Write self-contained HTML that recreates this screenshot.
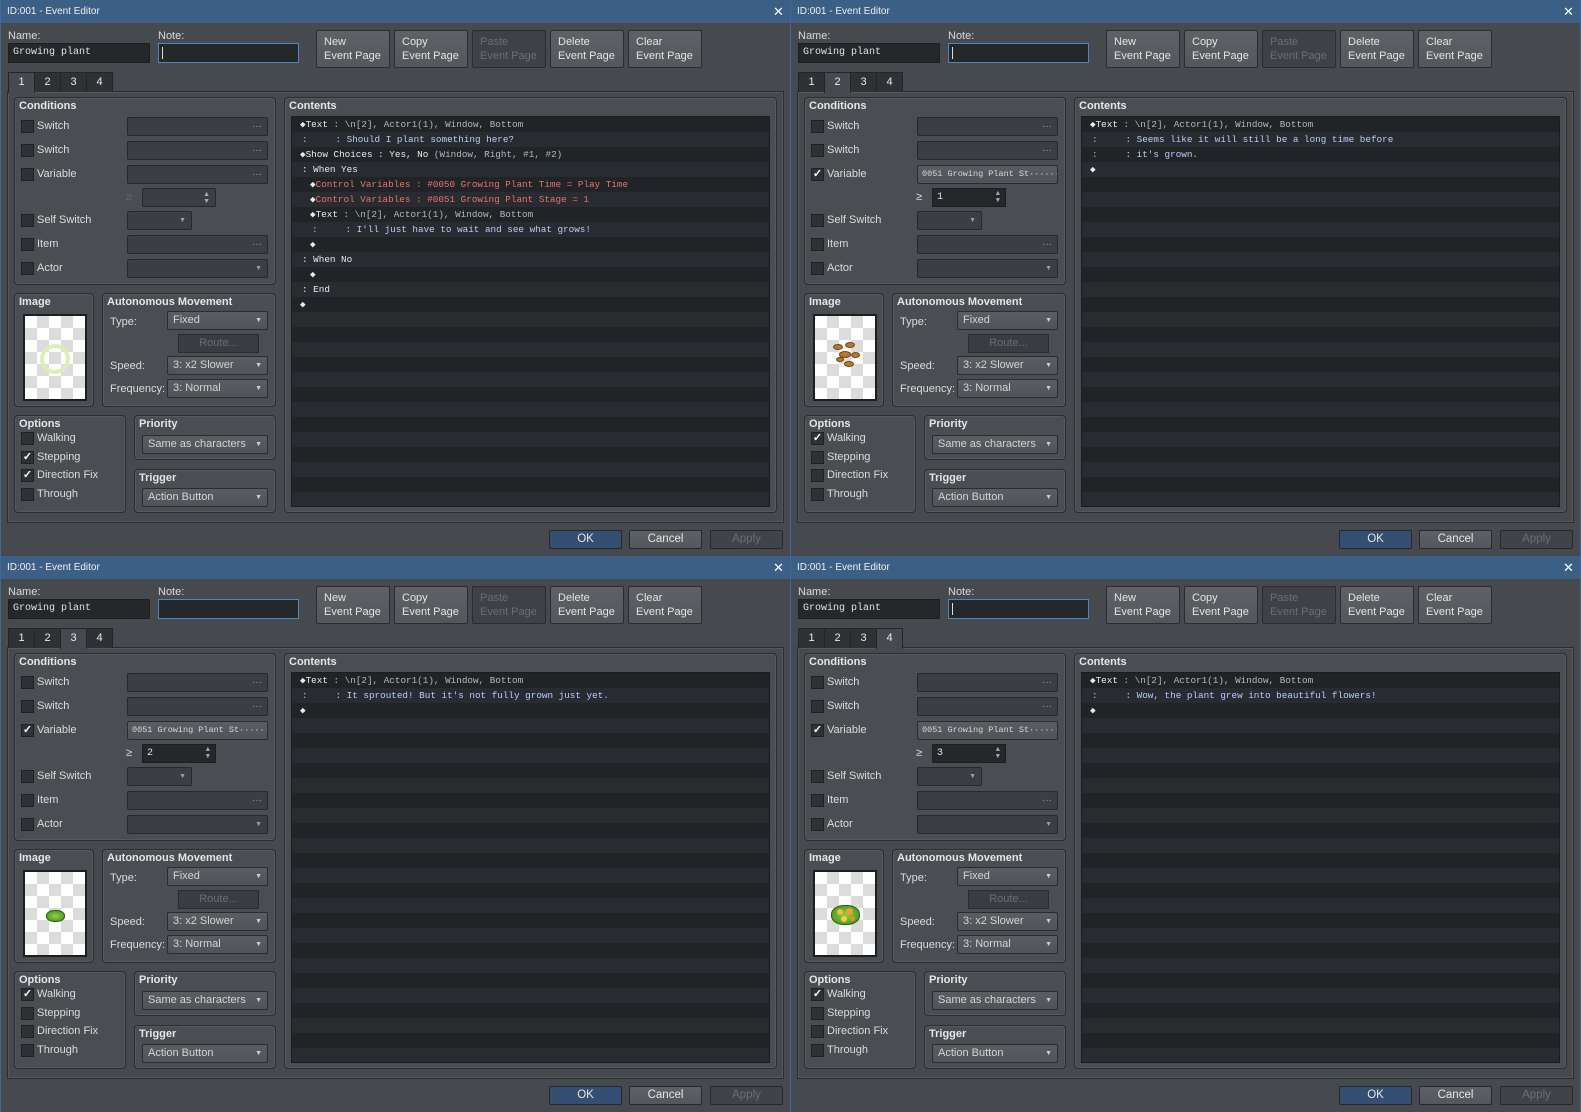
<!DOCTYPE html>
<html><head><meta charset="utf-8"><style>
*{box-sizing:border-box;margin:0;padding:0}
body{width:1581px;height:1112px;background:#3f6a95;overflow:hidden;font-family:"Liberation Sans",sans-serif;font-size:11px;color:#d6d6d6;position:relative}
.w{position:absolute;width:790px;height:556px;background:#46494d;border-left:1px solid #3f6a95;overflow:hidden}
.w div{position:absolute}
.w span{position:static}
.tb{left:0;top:0;width:790px;height:23px;background:#3c5f86;color:#f0f0f0;font-size:10px;line-height:23px;padding-left:6px}
.x{left:772px;top:0;font-size:13px;line-height:23px;color:#fff}
.lb{font-size:11px;color:#dadada}
.inp{background:#25282b;border:1px solid #1c1e20;height:20px;line-height:18px;padding-left:4px;font-family:"Liberation Mono",monospace;font-size:10px;color:#e0e0e0}
.note{border:1px solid #4e86c2;background:#25282b;height:20px}
.btn{width:74px;height:38px;background:linear-gradient(#5e6165,#54575b);border:1px solid #2a2c2f;border-radius:2px;color:#e4e4e4;padding:4px 0 0 7px;line-height:14px;font-size:11px}
.btn.d{background:#3e4145;color:#6b6e72}
.tab{top:72px;height:20px;width:27px;background:#2f3235;border:1px solid #232528;border-bottom:none;text-align:center;line-height:19px;color:#e8e8e8;font-size:11px}
.tab.s{background:#46494d;height:21px;z-index:2}
.pn{left:6px;top:91px;width:777px;height:432px;border:1px solid #2a2c2f;box-shadow:inset 0 0 0 1px #55585c}
.g{border:1px solid #2b2d30;border-radius:4px;background:#4a4d51;box-shadow:inset 0 0 0 1px #56595d}
.gt{left:4px;top:2px;font-weight:bold;font-size:11px;color:#e6e6e6;white-space:nowrap}
.cb{width:13px;height:13px;background:#2f3235;border:1px solid #1f2123;color:#fff;font-size:11px;line-height:11px;text-align:center;font-weight:bold}
.cl{white-space:nowrap;font-size:11px;color:#dcdcdc}
.fd{height:19px;background:#3b3e42;border:1px solid #26282b;border-radius:2px;color:#9a9da0;font-size:10px;line-height:17px;text-align:right;padding-right:5px}
.dd{height:19px;background:linear-gradient(#5a5d61,#505357);border:1px solid #2a2c2f;border-radius:2px;color:#d4d4d4;font-size:11px;line-height:17px;padding-left:5px;white-space:nowrap}
.dd.fv{color:#d8d8d8;text-align:left;padding-left:4px;font-family:"Liberation Mono",monospace;font-size:8.5px;overflow:hidden}
.dd i{position:absolute;right:5px;top:0;font-style:normal;font-size:7px;color:#cfcfcf}
.rt{height:19px;background:#393c40;border:1px solid #2a2c2f;color:#6a6d71;text-align:center;line-height:17px;font-size:11px}
.img{left:8px;top:20px;width:64px;height:87px;border:2px solid #1c1e20;background-color:#fff;background-image:conic-gradient(#dcdcdc 25%,#fff 0 50%,#dcdcdc 0 75%,#fff 0);background-size:24px 24px}
.lst{left:290px;top:116px;width:479px;height:391px;background:repeating-linear-gradient(#212427 0 15px,#282b2f 15px 30px);border:1px solid #1a1c1e}
.ln{left:0;height:15px;line-height:15px;font-family:"Liberation Mono",monospace;font-size:9.3px;white-space:pre;color:#b4b8bd}
.h{color:#e6eaf2}.m{color:#b9cdfb}.r{color:#e8716c}
.bb{top:530px;width:73px;height:19px;border:1px solid #26282b;border-radius:2px;text-align:center;line-height:17px;font-size:11.5px;color:#e6e6e6}
.ok{left:548px;background:#354f72}
.cn{left:628px;background:linear-gradient(#5e6165,#54575b)}
.ap{left:709px;background:#404347;color:#6b6e72}
.sp{font-size:7px;line-height:7px;color:#aaa}
</style></head><body>

<div class="w" style="left:0;top:0">
<div class="tb">ID:001 - Event Editor</div><div class="x">✕</div>
<div class="lb" style="left:7px;top:30px">Name:</div>
<div class="inp" style="left:7px;top:43px;width:142px">Growing plant</div>
<div class="lb" style="left:157px;top:30px">Note:</div>
<div class="note" style="left:157px;top:43px;width:141px"><div style="left:3px;top:3px;width:1px;height:12px;background:#ddd"></div></div>
<div class="btn" style="left:315px;top:30px">New<br>Event Page</div>
<div class="btn" style="left:393px;top:30px">Copy<br>Event Page</div>
<div class="btn d" style="left:471px;top:30px">Paste<br>Event Page</div>
<div class="btn" style="left:549px;top:30px">Delete<br>Event Page</div>
<div class="btn" style="left:627px;top:30px">Clear<br>Event Page</div>
<div class="pn"></div>
<div class="tab s" style="left:7px">1</div><div class="tab" style="left:33px">2</div><div class="tab" style="left:59px">3</div><div class="tab" style="left:85px">4</div>
<div class="g" style="left:13px;top:97px;width:262px;height:188px"><div class="gt">Conditions</div></div>
<div class="cb" style="left:20px;top:120px"></div><div class="cl" style="left:36px;top:120px">Switch</div><div class="fd" style="left:126px;top:117px;width:141px">···</div>
<div class="cb" style="left:20px;top:144px"></div><div class="cl" style="left:36px;top:144px">Switch</div><div class="fd" style="left:126px;top:141px;width:141px">···</div>
<div class="cb" style="left:20px;top:168px"></div><div class="cl" style="left:36px;top:168px">Variable</div><div class="fd" style="left:126px;top:165px;width:141px">···</div>
<div class="cl" style="left:125px;top:191px;color:#66696d">≥</div><div class="fd" style="left:141px;top:188px;width:74px"><div class="sp" style="right:5px;top:2px">▲<br>▼</div></div>
<div class="cb" style="left:20px;top:214px"></div><div class="cl" style="left:36px;top:214px">Self Switch</div><div class="fd" style="left:126px;top:211px;width:65px;font-size:7px">▼</div>
<div class="cb" style="left:20px;top:238px"></div><div class="cl" style="left:36px;top:238px">Item</div><div class="fd" style="left:126px;top:235px;width:141px">···</div>
<div class="cb" style="left:20px;top:262px"></div><div class="cl" style="left:36px;top:262px">Actor</div><div class="fd" style="left:126px;top:259px;width:141px;font-size:7px">▼</div>
<div class="g" style="left:13px;top:293px;width:80px;height:114px"><div class="gt">Image</div><div class="img"><div style="left:15px;top:28px;width:30px;height:30px;border-radius:50%;border:4px solid #d8f0b8"></div></div></div>
<div class="g" style="left:101px;top:293px;width:174px;height:114px"><div class="gt">Autonomous Movement</div></div>
<div class="cl" style="left:109px;top:316px">Type:</div><div class="dd" style="left:166px;top:311px;width:101px">Fixed<i>▼</i></div>
<div class="rt" style="left:177px;top:334px;width:81px">Route...</div>
<div class="cl" style="left:109px;top:360px">Speed:</div><div class="dd" style="left:166px;top:356px;width:101px">3: x2 Slower<i>▼</i></div>
<div class="cl" style="left:109px;top:383px">Frequency:</div><div class="dd" style="left:166px;top:379px;width:101px">3: Normal<i>▼</i></div>
<div class="g" style="left:13px;top:415px;width:112px;height:98px"><div class="gt">Options</div></div>
<div class="cb" style="left:20px;top:432px"></div><div class="cl" style="left:36px;top:432px">Walking</div>
<div class="cb" style="left:20px;top:451px">✓</div><div class="cl" style="left:36px;top:451px">Stepping</div>
<div class="cb" style="left:20px;top:469px">✓</div><div class="cl" style="left:36px;top:469px">Direction Fix</div>
<div class="cb" style="left:20px;top:488px"></div><div class="cl" style="left:36px;top:488px">Through</div>
<div class="g" style="left:133px;top:415px;width:142px;height:45px"><div class="gt">Priority</div></div>
<div class="dd" style="left:141px;top:435px;width:126px">Same as characters<i>▼</i></div>
<div class="g" style="left:133px;top:469px;width:142px;height:44px"><div class="gt">Trigger</div></div>
<div class="dd" style="left:141px;top:488px;width:126px">Action Button<i>▼</i></div>
<div class="g" style="left:283px;top:97px;width:493px;height:416px"><div class="gt">Contents</div></div>
<div class="lst">
<div class="ln" style="top:0;left:8px"><span class="h">◆Text</span> : \n[2], Actor1(1), Window, Bottom</div>
<div class="ln" style="top:15px;left:10px">:     <span class="m">: Should I plant something here?</span></div>
<div class="ln" style="top:30px;left:8px"><span class="h">◆Show Choices : Yes, No</span> (Window, Right, #1, #2)</div>
<div class="ln" style="top:45px;left:10px"><span class="h">: When Yes</span></div>
<div class="ln r" style="top:60px;left:18px"><span class="h">◆</span>Control Variables : #0050 Growing Plant Time = Play Time</div>
<div class="ln r" style="top:75px;left:18px"><span class="h">◆</span>Control Variables : #0051 Growing Plant Stage = 1</div>
<div class="ln" style="top:90px;left:18px"><span class="h">◆Text</span> : \n[2], Actor1(1), Window, Bottom</div>
<div class="ln" style="top:105px;left:20px">:     <span class="m">: I'll just have to wait and see what grows!</span></div>
<div class="ln h" style="top:120px;left:18px">◆</div>
<div class="ln" style="top:135px;left:10px"><span class="h">: When No</span></div>
<div class="ln h" style="top:150px;left:18px">◆</div>
<div class="ln" style="top:165px;left:10px"><span class="h">: End</span></div>
<div class="ln h" style="top:180px;left:8px">◆</div>
</div>
<div class="bb ok">OK</div><div class="bb cn">Cancel</div><div class="bb ap">Apply</div>
</div>

<div class="w" style="left:790px;top:0">
<div class="tb">ID:001 - Event Editor</div><div class="x">✕</div>
<div class="lb" style="left:7px;top:30px">Name:</div>
<div class="inp" style="left:7px;top:43px;width:142px">Growing plant</div>
<div class="lb" style="left:157px;top:30px">Note:</div>
<div class="note" style="left:157px;top:43px;width:141px"><div style="left:3px;top:3px;width:1px;height:12px;background:#ddd"></div></div>
<div class="btn" style="left:315px;top:30px">New<br>Event Page</div>
<div class="btn" style="left:393px;top:30px">Copy<br>Event Page</div>
<div class="btn d" style="left:471px;top:30px">Paste<br>Event Page</div>
<div class="btn" style="left:549px;top:30px">Delete<br>Event Page</div>
<div class="btn" style="left:627px;top:30px">Clear<br>Event Page</div>
<div class="pn"></div>
<div class="tab" style="left:7px">1</div><div class="tab s" style="left:33px">2</div><div class="tab" style="left:59px">3</div><div class="tab" style="left:85px">4</div>
<div class="g" style="left:13px;top:97px;width:262px;height:188px"><div class="gt">Conditions</div></div>
<div class="cb" style="left:20px;top:120px"></div><div class="cl" style="left:36px;top:120px">Switch</div><div class="fd" style="left:126px;top:117px;width:141px">···</div>
<div class="cb" style="left:20px;top:144px"></div><div class="cl" style="left:36px;top:144px">Switch</div><div class="fd" style="left:126px;top:141px;width:141px">···</div>
<div class="cb" style="left:20px;top:168px">✓</div><div class="cl" style="left:36px;top:168px">Variable</div><div class="dd fv" style="left:126px;top:165px;width:141px">0051 Growing Plant St······</div>
<div class="cl" style="left:125px;top:191px">≥</div><div class="inp" style="left:141px;top:188px;width:74px;height:19px;line-height:17px">1<div class="sp" style="right:5px;top:2px">▲<br>▼</div></div>
<div class="cb" style="left:20px;top:214px"></div><div class="cl" style="left:36px;top:214px">Self Switch</div><div class="fd" style="left:126px;top:211px;width:65px;font-size:7px">▼</div>
<div class="cb" style="left:20px;top:238px"></div><div class="cl" style="left:36px;top:238px">Item</div><div class="fd" style="left:126px;top:235px;width:141px">···</div>
<div class="cb" style="left:20px;top:262px"></div><div class="cl" style="left:36px;top:262px">Actor</div><div class="fd" style="left:126px;top:259px;width:141px;font-size:7px">▼</div>
<div class="g" style="left:13px;top:293px;width:80px;height:114px"><div class="gt">Image</div><div class="img">
<div style="left:18px;top:28px;width:10px;height:6px;border-radius:50%;background:#b8772e;border:1px solid #6e4210"></div>
<div style="left:30px;top:26px;width:10px;height:6px;border-radius:50%;background:#b8772e;border:1px solid #6e4210"></div>
<div style="left:24px;top:35px;width:12px;height:7px;border-radius:50%;background:#b8772e;border:1px solid #6e4210"></div>
<div style="left:36px;top:36px;width:9px;height:6px;border-radius:50%;background:#b8772e;border:1px solid #6e4210"></div>
<div style="left:21px;top:41px;width:8px;height:5px;border-radius:50%;background:#b8772e;border:1px solid #6e4210"></div>
<div style="left:29px;top:45px;width:10px;height:6px;border-radius:50%;background:#b8772e;border:1px solid #6e4210"></div>
</div></div>
<div class="g" style="left:101px;top:293px;width:174px;height:114px"><div class="gt">Autonomous Movement</div></div>
<div class="cl" style="left:109px;top:316px">Type:</div><div class="dd" style="left:166px;top:311px;width:101px">Fixed<i>▼</i></div>
<div class="rt" style="left:177px;top:334px;width:81px">Route...</div>
<div class="cl" style="left:109px;top:360px">Speed:</div><div class="dd" style="left:166px;top:356px;width:101px">3: x2 Slower<i>▼</i></div>
<div class="cl" style="left:109px;top:383px">Frequency:</div><div class="dd" style="left:166px;top:379px;width:101px">3: Normal<i>▼</i></div>
<div class="g" style="left:13px;top:415px;width:112px;height:98px"><div class="gt">Options</div></div>
<div class="cb" style="left:20px;top:432px">✓</div><div class="cl" style="left:36px;top:432px">Walking</div>
<div class="cb" style="left:20px;top:451px"></div><div class="cl" style="left:36px;top:451px">Stepping</div>
<div class="cb" style="left:20px;top:469px"></div><div class="cl" style="left:36px;top:469px">Direction Fix</div>
<div class="cb" style="left:20px;top:488px"></div><div class="cl" style="left:36px;top:488px">Through</div>
<div class="g" style="left:133px;top:415px;width:142px;height:45px"><div class="gt">Priority</div></div>
<div class="dd" style="left:141px;top:435px;width:126px">Same as characters<i>▼</i></div>
<div class="g" style="left:133px;top:469px;width:142px;height:44px"><div class="gt">Trigger</div></div>
<div class="dd" style="left:141px;top:488px;width:126px">Action Button<i>▼</i></div>
<div class="g" style="left:283px;top:97px;width:493px;height:416px"><div class="gt">Contents</div></div>
<div class="lst">
<div class="ln" style="top:0;left:8px"><span class="h">◆Text</span> : \n[2], Actor1(1), Window, Bottom</div>
<div class="ln" style="top:15px;left:10px">:     <span class="m">: Seems like it will still be a long time before</span></div>
<div class="ln" style="top:30px;left:10px">:     <span class="m">: it's grown.</span></div>
<div class="ln h" style="top:45px;left:8px">◆</div>
</div>
<div class="bb ok">OK</div><div class="bb cn">Cancel</div><div class="bb ap">Apply</div>
</div>

<div class="w" style="left:0;top:556px">
<div class="tb">ID:001 - Event Editor</div><div class="x">✕</div>
<div class="lb" style="left:7px;top:30px">Name:</div>
<div class="inp" style="left:7px;top:43px;width:142px">Growing plant</div>
<div class="lb" style="left:157px;top:30px">Note:</div>
<div class="note" style="left:157px;top:43px;width:141px"></div>
<div class="btn" style="left:315px;top:30px">New<br>Event Page</div>
<div class="btn" style="left:393px;top:30px">Copy<br>Event Page</div>
<div class="btn d" style="left:471px;top:30px">Paste<br>Event Page</div>
<div class="btn" style="left:549px;top:30px">Delete<br>Event Page</div>
<div class="btn" style="left:627px;top:30px">Clear<br>Event Page</div>
<div class="pn"></div>
<div class="tab" style="left:7px">1</div><div class="tab" style="left:33px">2</div><div class="tab s" style="left:59px">3</div><div class="tab" style="left:85px">4</div>
<div class="g" style="left:13px;top:97px;width:262px;height:188px"><div class="gt">Conditions</div></div>
<div class="cb" style="left:20px;top:120px"></div><div class="cl" style="left:36px;top:120px">Switch</div><div class="fd" style="left:126px;top:117px;width:141px">···</div>
<div class="cb" style="left:20px;top:144px"></div><div class="cl" style="left:36px;top:144px">Switch</div><div class="fd" style="left:126px;top:141px;width:141px">···</div>
<div class="cb" style="left:20px;top:168px">✓</div><div class="cl" style="left:36px;top:168px">Variable</div><div class="dd fv" style="left:126px;top:165px;width:141px">0051 Growing Plant St······</div>
<div class="cl" style="left:125px;top:191px">≥</div><div class="inp" style="left:141px;top:188px;width:74px;height:19px;line-height:17px">2<div class="sp" style="right:5px;top:2px">▲<br>▼</div></div>
<div class="cb" style="left:20px;top:214px"></div><div class="cl" style="left:36px;top:214px">Self Switch</div><div class="fd" style="left:126px;top:211px;width:65px;font-size:7px">▼</div>
<div class="cb" style="left:20px;top:238px"></div><div class="cl" style="left:36px;top:238px">Item</div><div class="fd" style="left:126px;top:235px;width:141px">···</div>
<div class="cb" style="left:20px;top:262px"></div><div class="cl" style="left:36px;top:262px">Actor</div><div class="fd" style="left:126px;top:259px;width:141px;font-size:7px">▼</div>
<div class="g" style="left:13px;top:293px;width:80px;height:114px"><div class="gt">Image</div><div class="img">
<div style="left:21px;top:38px;width:19px;height:12px;border-radius:45%;background:radial-gradient(#8ed04a,#3f8a1c);border:1px solid #2a5e12"></div>
</div></div>
<div class="g" style="left:101px;top:293px;width:174px;height:114px"><div class="gt">Autonomous Movement</div></div>
<div class="cl" style="left:109px;top:316px">Type:</div><div class="dd" style="left:166px;top:311px;width:101px">Fixed<i>▼</i></div>
<div class="rt" style="left:177px;top:334px;width:81px">Route...</div>
<div class="cl" style="left:109px;top:360px">Speed:</div><div class="dd" style="left:166px;top:356px;width:101px">3: x2 Slower<i>▼</i></div>
<div class="cl" style="left:109px;top:383px">Frequency:</div><div class="dd" style="left:166px;top:379px;width:101px">3: Normal<i>▼</i></div>
<div class="g" style="left:13px;top:415px;width:112px;height:98px"><div class="gt">Options</div></div>
<div class="cb" style="left:20px;top:432px">✓</div><div class="cl" style="left:36px;top:432px">Walking</div>
<div class="cb" style="left:20px;top:451px"></div><div class="cl" style="left:36px;top:451px">Stepping</div>
<div class="cb" style="left:20px;top:469px"></div><div class="cl" style="left:36px;top:469px">Direction Fix</div>
<div class="cb" style="left:20px;top:488px"></div><div class="cl" style="left:36px;top:488px">Through</div>
<div class="g" style="left:133px;top:415px;width:142px;height:45px"><div class="gt">Priority</div></div>
<div class="dd" style="left:141px;top:435px;width:126px">Same as characters<i>▼</i></div>
<div class="g" style="left:133px;top:469px;width:142px;height:44px"><div class="gt">Trigger</div></div>
<div class="dd" style="left:141px;top:488px;width:126px">Action Button<i>▼</i></div>
<div class="g" style="left:283px;top:97px;width:493px;height:416px"><div class="gt">Contents</div></div>
<div class="lst">
<div class="ln" style="top:0;left:8px"><span class="h">◆Text</span> : \n[2], Actor1(1), Window, Bottom</div>
<div class="ln" style="top:15px;left:10px">:     <span class="m">: It sprouted! But it's not fully grown just yet.</span></div>
<div class="ln h" style="top:30px;left:8px">◆</div>
</div>
<div class="bb ok">OK</div><div class="bb cn">Cancel</div><div class="bb ap">Apply</div>
</div>

<div class="w" style="left:790px;top:556px">
<div class="tb">ID:001 - Event Editor</div><div class="x">✕</div>
<div class="lb" style="left:7px;top:30px">Name:</div>
<div class="inp" style="left:7px;top:43px;width:142px">Growing plant</div>
<div class="lb" style="left:157px;top:30px">Note:</div>
<div class="note" style="left:157px;top:43px;width:141px"><div style="left:3px;top:3px;width:1px;height:12px;background:#ddd"></div></div>
<div class="btn" style="left:315px;top:30px">New<br>Event Page</div>
<div class="btn" style="left:393px;top:30px">Copy<br>Event Page</div>
<div class="btn d" style="left:471px;top:30px">Paste<br>Event Page</div>
<div class="btn" style="left:549px;top:30px">Delete<br>Event Page</div>
<div class="btn" style="left:627px;top:30px">Clear<br>Event Page</div>
<div class="pn"></div>
<div class="tab" style="left:7px">1</div><div class="tab" style="left:33px">2</div><div class="tab" style="left:59px">3</div><div class="tab s" style="left:85px">4</div>
<div class="g" style="left:13px;top:97px;width:262px;height:188px"><div class="gt">Conditions</div></div>
<div class="cb" style="left:20px;top:120px"></div><div class="cl" style="left:36px;top:120px">Switch</div><div class="fd" style="left:126px;top:117px;width:141px">···</div>
<div class="cb" style="left:20px;top:144px"></div><div class="cl" style="left:36px;top:144px">Switch</div><div class="fd" style="left:126px;top:141px;width:141px">···</div>
<div class="cb" style="left:20px;top:168px">✓</div><div class="cl" style="left:36px;top:168px">Variable</div><div class="dd fv" style="left:126px;top:165px;width:141px">0051 Growing Plant St······</div>
<div class="cl" style="left:125px;top:191px">≥</div><div class="inp" style="left:141px;top:188px;width:74px;height:19px;line-height:17px">3<div class="sp" style="right:5px;top:2px">▲<br>▼</div></div>
<div class="cb" style="left:20px;top:214px"></div><div class="cl" style="left:36px;top:214px">Self Switch</div><div class="fd" style="left:126px;top:211px;width:65px;font-size:7px">▼</div>
<div class="cb" style="left:20px;top:238px"></div><div class="cl" style="left:36px;top:238px">Item</div><div class="fd" style="left:126px;top:235px;width:141px">···</div>
<div class="cb" style="left:20px;top:262px"></div><div class="cl" style="left:36px;top:262px">Actor</div><div class="fd" style="left:126px;top:259px;width:141px;font-size:7px">▼</div>
<div class="g" style="left:13px;top:293px;width:80px;height:114px"><div class="gt">Image</div><div class="img">
<div style="left:16px;top:33px;width:29px;height:20px;border-radius:45%;background:radial-gradient(#8ed04a,#3f8a1c);border:1px solid #2a5e12"></div>
<div style="left:22px;top:37px;width:6px;height:6px;border-radius:50%;background:#f0c030"></div>
<div style="left:31px;top:36px;width:7px;height:7px;border-radius:50%;background:#f5a020"></div>
<div style="left:26px;top:44px;width:6px;height:6px;border-radius:50%;background:#f0d040"></div>
<div style="left:35px;top:44px;width:5px;height:5px;border-radius:50%;background:#e89018"></div>
</div></div>
<div class="g" style="left:101px;top:293px;width:174px;height:114px"><div class="gt">Autonomous Movement</div></div>
<div class="cl" style="left:109px;top:316px">Type:</div><div class="dd" style="left:166px;top:311px;width:101px">Fixed<i>▼</i></div>
<div class="rt" style="left:177px;top:334px;width:81px">Route...</div>
<div class="cl" style="left:109px;top:360px">Speed:</div><div class="dd" style="left:166px;top:356px;width:101px">3: x2 Slower<i>▼</i></div>
<div class="cl" style="left:109px;top:383px">Frequency:</div><div class="dd" style="left:166px;top:379px;width:101px">3: Normal<i>▼</i></div>
<div class="g" style="left:13px;top:415px;width:112px;height:98px"><div class="gt">Options</div></div>
<div class="cb" style="left:20px;top:432px">✓</div><div class="cl" style="left:36px;top:432px">Walking</div>
<div class="cb" style="left:20px;top:451px"></div><div class="cl" style="left:36px;top:451px">Stepping</div>
<div class="cb" style="left:20px;top:469px"></div><div class="cl" style="left:36px;top:469px">Direction Fix</div>
<div class="cb" style="left:20px;top:488px"></div><div class="cl" style="left:36px;top:488px">Through</div>
<div class="g" style="left:133px;top:415px;width:142px;height:45px"><div class="gt">Priority</div></div>
<div class="dd" style="left:141px;top:435px;width:126px">Same as characters<i>▼</i></div>
<div class="g" style="left:133px;top:469px;width:142px;height:44px"><div class="gt">Trigger</div></div>
<div class="dd" style="left:141px;top:488px;width:126px">Action Button<i>▼</i></div>
<div class="g" style="left:283px;top:97px;width:493px;height:416px"><div class="gt">Contents</div></div>
<div class="lst">
<div class="ln" style="top:0;left:8px"><span class="h">◆Text</span> : \n[2], Actor1(1), Window, Bottom</div>
<div class="ln" style="top:15px;left:10px">:     <span class="m">: Wow, the plant grew into beautiful flowers!</span></div>
<div class="ln h" style="top:30px;left:8px">◆</div>
</div>
<div class="bb ok">OK</div><div class="bb cn">Cancel</div><div class="bb ap">Apply</div>
</div>

</body></html>
